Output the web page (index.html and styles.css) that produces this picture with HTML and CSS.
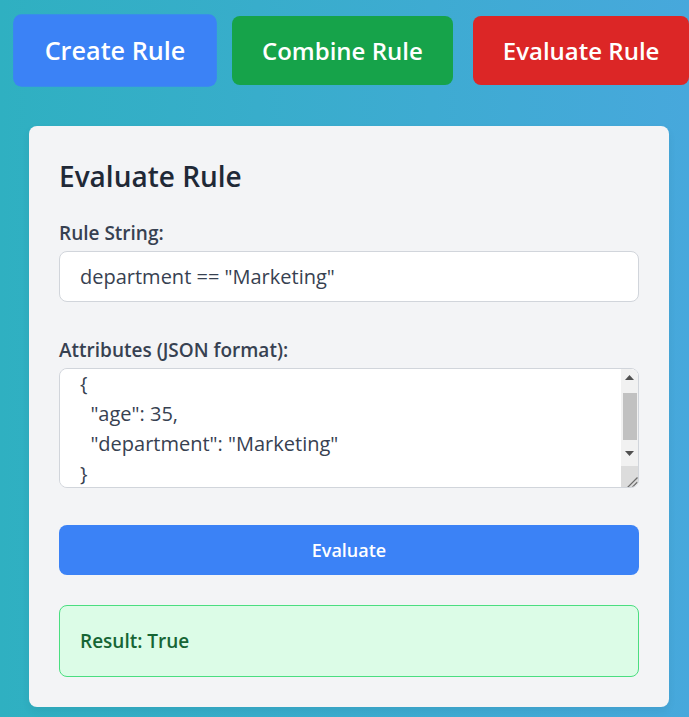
FILE: index.html
```html
<!DOCTYPE html>
<html lang="en">
<head>
<meta charset="utf-8">
<title>Rule Engine</title>
<link rel="stylesheet" href="styles.css">
</head>
<body>
<div class="page">
  <nav class="tabs">
    <button class="tab tab-create">Create Rule</button>
    <button class="tab tab-combine">Combine Rule</button>
    <button class="tab tab-evaluate">Evaluate Rule</button>
  </nav>
  <section class="card">
    <h2 class="card-title">Evaluate Rule</h2>
    <label class="field-label" for="rule">Rule String:</label>
    <input class="field-input" id="rule" type="text" value="department == &quot;Marketing&quot;">
    <label class="field-label" for="attrs">Attributes (JSON format):</label>
    <div class="area-wrap">
      <textarea class="field-area" id="attrs">{
  "age": 35,
  "department": "Marketing"
}</textarea>
      <div class="scrollbar" aria-hidden="true">
        <div class="sb-btn">
          <svg width="9" height="5" viewBox="0 0 9 5"><polygon points="0,5 4.5,0 9,5" fill="#505050"/></svg>
        </div>
        <div class="sb-track"><div class="sb-thumb"></div></div>
        <div class="sb-btn">
          <svg width="9" height="5" viewBox="0 0 9 5"><polygon points="0,0 9,0 4.5,5" fill="#505050"/></svg>
        </div>
        <div class="sb-gap"></div>
        <div class="sb-corner">
          <svg width="17" height="21" viewBox="0 0 17 21"><line x1="16.5" y1="11.5" x2="6.5" y2="21.5" stroke="#6b6b6b" stroke-width="1.2"/><line x1="16.5" y1="16" x2="11" y2="21.5" stroke="#6b6b6b" stroke-width="1.2"/></svg>
        </div>
      </div>
    </div>
    <button class="submit">Evaluate</button>
    <div class="result">Result: True</div>
  </section>
</div>
<script src="script.js"></script>
</body>
</html>
```

FILE: styles.css
```css
* { box-sizing: border-box; }
html, body { margin: 0; padding: 0; }
body {
  font-family: "Open Sans", "Noto Sans", sans-serif;
  background: linear-gradient(to right, #2fb0c1, #47a8dc);
  min-height: 717px;
  overflow: hidden;
}
.page {
  padding: 16px 0 0 0;
}
.tabs {
  display: flex;
  gap: 20px;
  padding-left: 18px;
}
.tab {
  border: none;
  border-radius: 8px;
  height: 69px;
  padding: 0 30px;
  font-family: inherit;
  font-size: 24px;
  font-weight: 600;
  color: #ffffff;
  line-height: 69px;
  white-space: nowrap;
  cursor: pointer;
}
.tab-create { background: #3b82f6; transform: scale(1.05); }
.tab-combine { background: #16a34a; }
.tab-evaluate { background: #dc2626; }
.card {
  width: 640px;
  margin: 41px 0 0 29px;
  padding: 30px;
  background: #f3f4f6;
  border-radius: 8px;
  box-shadow: 0 4px 8px rgba(0,0,0,0.06);
}
.card-title {
  margin: 0 0 24px;
  font-size: 28px;
  line-height: 40px;
  font-weight: 600;
  color: #1f2937;
}
.field-label {
  display: block;
  margin-bottom: 5px;
  font-size: 19px;
  line-height: 26px;
  font-weight: 600;
  color: #374151;
}
.field-input {
  display: block;
  width: 100%;
  height: 51px;
  margin: 0 0 35px;
  padding: 0 20px;
  border: 1px solid #d1d5db;
  border-radius: 8px;
  background: #ffffff;
  font-family: inherit;
  font-size: 20px;
  color: #374151;
}
.area-wrap {
  position: relative;
}
.field-area {
  display: block;
  width: 100%;
  height: 120px;
  margin: 0;
  padding: 12px 40px 12px 20px;
  border: 1px solid #d1d5db;
  border-radius: 8px;
  background: #ffffff;
  font-family: inherit;
  font-size: 20px;
  line-height: 30px;
  color: #374151;
  overflow-y: scroll;
  resize: none;
}
.scrollbar {
  position: absolute;
  top: 1px;
  right: 1px;
  bottom: 1px;
  width: 17px;
  display: flex;
  flex-direction: column;
  background: #f1f1f1;
  border-radius: 0 7px 7px 0;
  overflow: hidden;
}
.sb-btn {
  height: 17px;
  flex: none;
  display: flex;
  align-items: center;
  justify-content: center;
}
.sb-btn svg { display: block; }
.sb-track {
  flex: 1;
  padding-top: 7px;
}
.sb-thumb {
  height: 47px;
  margin: 0 1px 0 2px;
  background: #c1c1c1;
}
.sb-gap {
  height: 4px;
  flex: none;
}
.sb-corner {
  height: 21px;
  flex: none;
  background: #dcdcdc;
}
.sb-corner svg { display: block; }
.submit {
  display: block;
  width: 100%;
  height: 50px;
  margin: 37px 0 30px;
  border: none;
  border-radius: 8px;
  background: #3b82f6;
  color: #ffffff;
  font-family: inherit;
  font-size: 18px;
  font-weight: 600;
}
.result {
  padding: 19px 20px;
  border: 1px solid #4ade80;
  border-radius: 8px;
  background: #dcfce7;
  color: #166534;
  font-size: 19px;
  line-height: 32px;
  font-weight: 600;
}
```

FILE: script.js
```js
document.getElementById('attrs').scrollTop = 12;
```
